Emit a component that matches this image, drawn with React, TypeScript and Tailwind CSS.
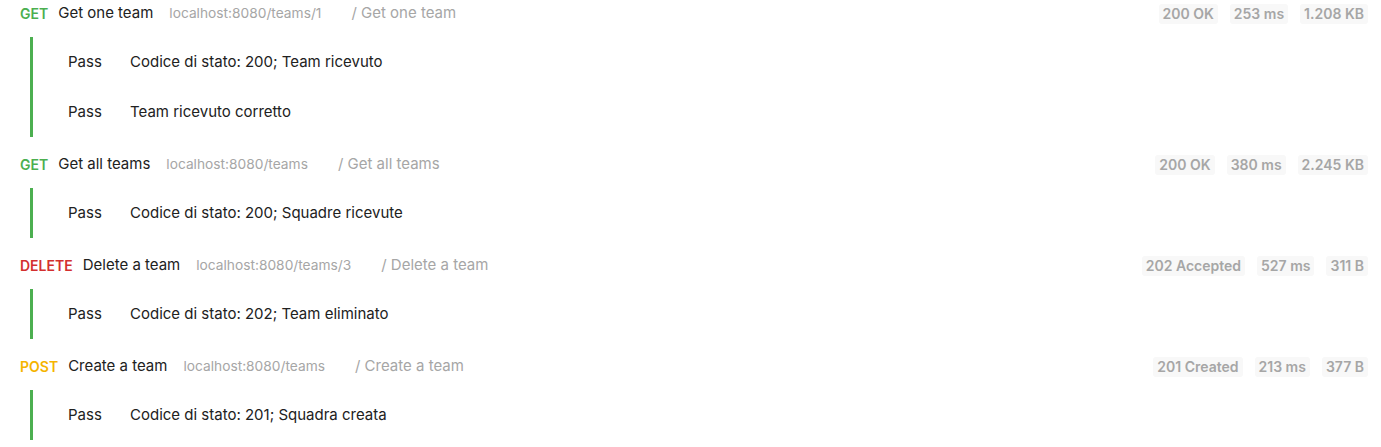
const requests = [
  {
    method: "GET",
    name: "Get one team",
    url: "localhost:8080/teams/1",
    path: "/ Get one team",
    status: "200 OK",
    time: "253 ms",
    size: "1.208 KB",
    tests: ["Codice di stato: 200; Team ricevuto", "Team ricevuto corretto"],
  },
  {
    method: "GET",
    name: "Get all teams",
    url: "localhost:8080/teams",
    path: "/ Get all teams",
    status: "200 OK",
    time: "380 ms",
    size: "2.245 KB",
    tests: ["Codice di stato: 200; Squadre ricevute"],
  },
  {
    method: "DELETE",
    name: "Delete a team",
    url: "localhost:8080/teams/3",
    path: "/ Delete a team",
    status: "202 Accepted",
    time: "527 ms",
    size: "311 B",
    tests: ["Codice di stato: 202; Team eliminato"],
  },
  {
    method: "POST",
    name: "Create a team",
    url: "localhost:8080/teams",
    path: "/ Create a team",
    status: "201 Created",
    time: "213 ms",
    size: "377 B",
    tests: ["Codice di stato: 201; Squadra creata"],
  },
];

const methodColor: Record<string, string> = {
  GET: "text-[#4caf50]",
  DELETE: "text-[#d32f2f]",
  POST: "text-[#f5b400]",
};

export default function App() {
  return (
    <div
      className="h-[447px] w-full overflow-hidden bg-white"
      style={{ fontFamily: "Inter, 'Noto Sans', sans-serif" }}
    >
      <div className="-mt-[14px]">
        {requests.map((req) => (
          <div key={req.name}>
            {/* Request header */}
            <div className="flex h-[51px] items-center pl-[20px] pr-[13px] pt-[4px]">
              <span className={`text-[14px] font-semibold ${methodColor[req.method]}`}>
                {req.method}
              </span>
              <span className="ml-[10px] text-[15px] text-[#212121]">{req.name}</span>
              <span className="ml-[16px] text-[13.75px] text-[#a6a6a6]">{req.url}</span>
              <span className="ml-[30px] text-[15px] text-[#a6a6a6]">{req.path}</span>
              <div className="ml-auto flex gap-[12px] text-[14px] font-semibold text-[#a6a6a6]">
                <span className="rounded-[3px] bg-[#f8f8f8] px-[4px] leading-[20px]">{req.status}</span>
                <span className="rounded-[3px] bg-[#f8f8f8] px-[4px] leading-[20px]">{req.time}</span>
                <span className="rounded-[3px] bg-[#f8f8f8] px-[4px] leading-[20px]">{req.size}</span>
              </div>
            </div>

            {/* Test results */}
            <div className="ml-[30px] border-l-[3px] border-[#4caf50]">
              {req.tests.map((t) => (
                <div key={t} className="flex h-[50px] items-center pl-[35px] text-[15px] text-[#212121]">
                  <span className="w-[62px]">Pass</span>
                  <span>{t}</span>
                </div>
              ))}
            </div>
          </div>
        ))}
      </div>
    </div>
  );
}
